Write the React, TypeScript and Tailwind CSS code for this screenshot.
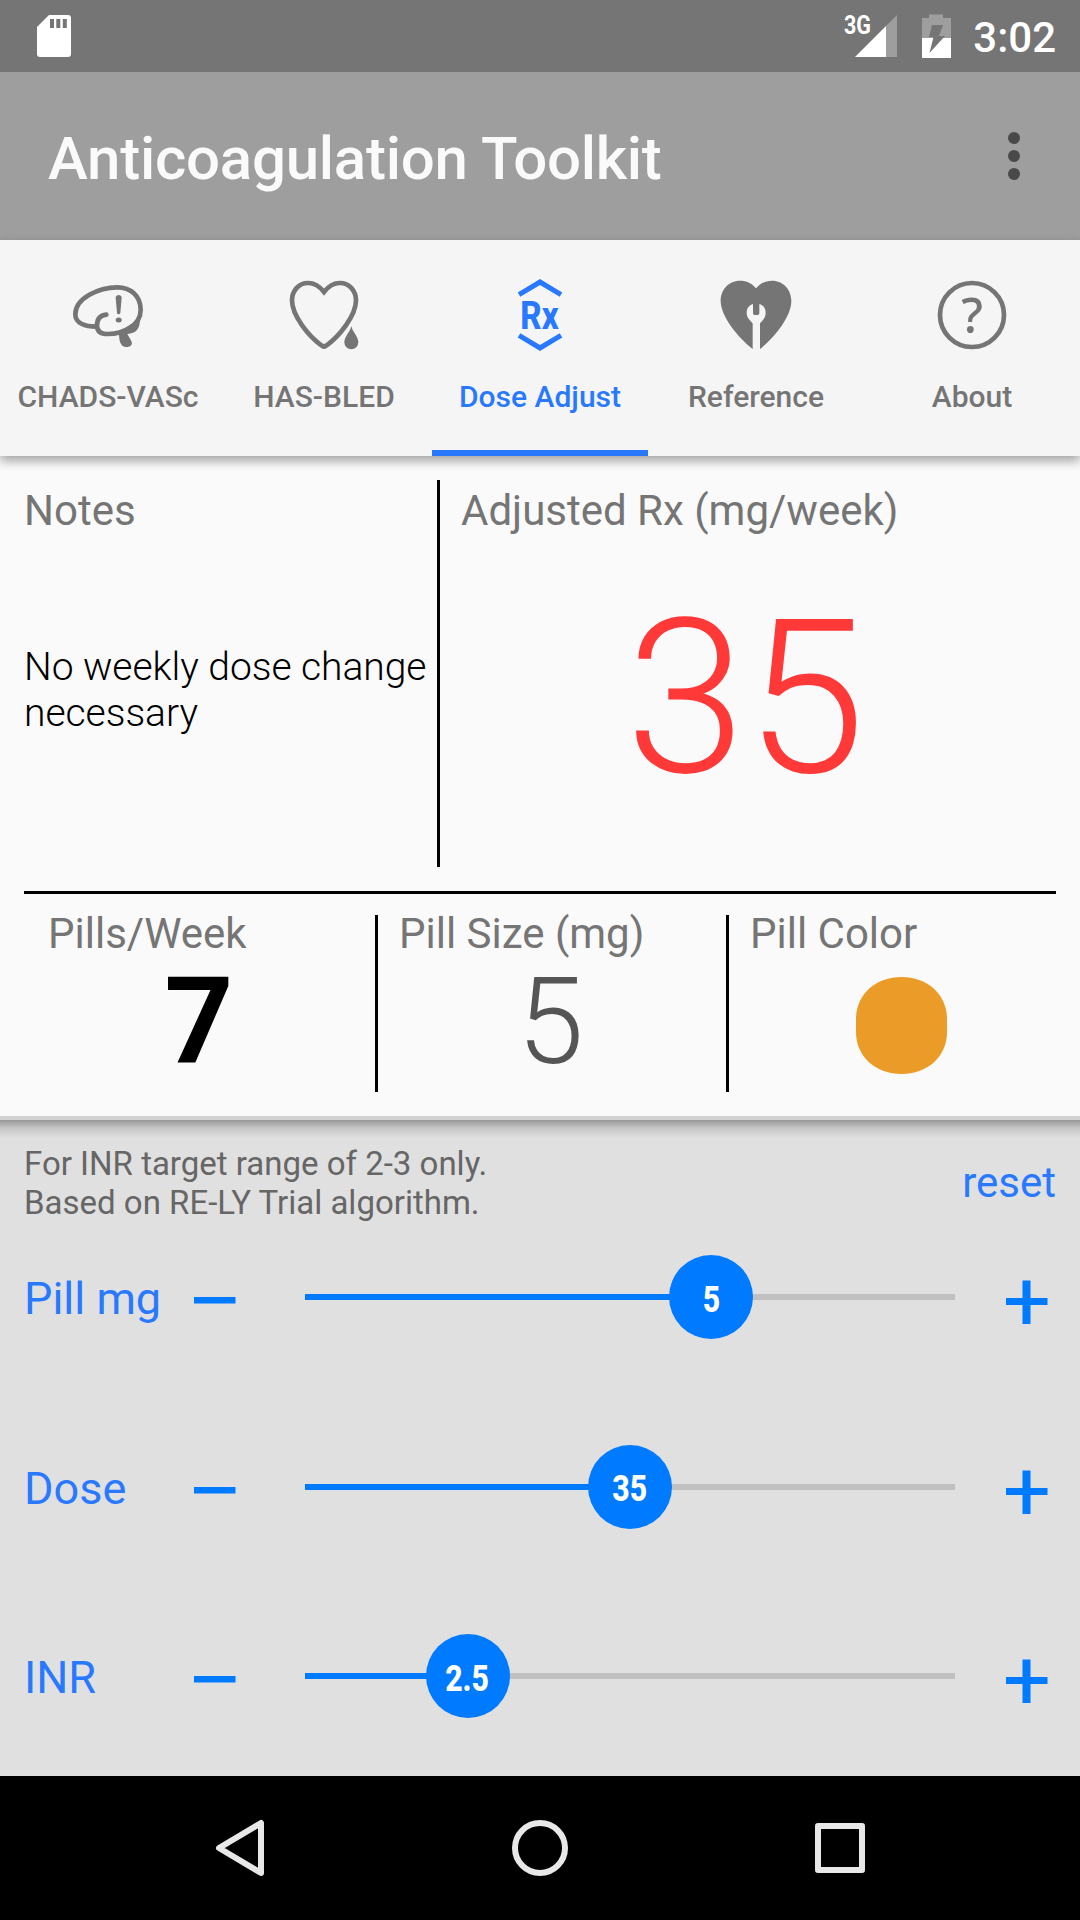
import React, { useState } from "react";

const tabs = [
  { name: "CHADS-VASc", icon: <BrainIcon /> },
  { name: "HAS-BLED", icon: <BleedIcon /> },
  { name: "Dose Adjust", icon: <RxIcon /> },
  { name: "Reference", icon: <ReferenceIcon /> },
  { name: "About", icon: <AboutIcon /> },
];

function BrainIcon() {
  return (
    <svg className="size-[72px]" viewBox="0 0 216 216" fill="none">
      <path
        d="M103 107C84 109 75 122 75 140C75 158 88 165 108 165C150 165 206 142 206 92C206 50 175 25 136 25C80 25 10 58 10 106C10 132 38 143 74 143"
        stroke="currentColor"
        strokeWidth="14"
        strokeLinecap="round"
      />
      <path
        d="M204 118C204 152 192 163 166 165L178 186C186 204 162 208 151 200C143 193 141 180 141 160Z"
        fill="currentColor"
      />
      <path
        d="M131 56C131 45 149 45 149 56L145 102C144 107 136 107 135 102Z"
        fill="currentColor"
      />
      <ellipse cx="140" cy="123" rx="9" ry="7.500" fill="currentColor" />
    </svg>
  );
}

function BleedIcon() {
  return (
    <svg className="size-[72px]" viewBox="0 0 216 216">
      <path
        d="M108 39C95 22 80 12 60 12C32 12 12 36 12 64C12 110 62 172 100 199Q108 206 116 199C154 172 204 110 204 64C204 36 184 12 156 12C136 12 121 22 108 39Z"
        fill="none"
        stroke="currentColor"
        strokeWidth="14"
      />
      <path
        d="M190 141C194 160 211 172 211 190A21 21 0 0 1 169 190C169 172 186 160 190 141Z"
        fill="currentColor"
      />
    </svg>
  );
}

function RxIcon() {
  return (
    <svg className="size-[72px]" viewBox="0 0 216 216">
      <path
        d="M45 47L108 9L171 47M45 169L108 207L171 169"
        fill="none"
        stroke="currentColor"
        strokeWidth="15"
      />
      <text
        x="49"
        y="149"
        fontSize="114"
        fontWeight="800"
        textLength="115"
        lengthAdjust="spacingAndGlyphs"
        fill="currentColor"
      >
        Rx
      </text>
    </svg>
  );
}

function ReferenceIcon() {
  return (
    <svg className="size-[72px]" viewBox="0 0 216 216">
      <path
        d="M108 28C96 13 80 5 60 5C26 5 2 32 2 66C2 110 50 172 98 210L120 210C168 172 214 110 214 66C214 32 190 5 156 5C136 5 120 13 108 28Z"
        fill="currentColor"
      />
      {/* wrench */}
      <path
        d="M99 75C87 79 80 88 80 101C80 117 90 123 98 133V211H120V133C128 123 137 117 137 101C137 88 130 79 118 75V103Q118 108 113 108H104Q99 108 99 103Z"
        fill="#f5f5f5"
      />
    </svg>
  );
}

function AboutIcon() {
  return (
    <svg className="size-[72px]" viewBox="0 0 216 216">
      <circle
        cx="108"
        cy="108"
        r="96"
        fill="none"
        stroke="currentColor"
        strokeWidth="14"
      />
      <text
        x="108"
        y="162"
        fontSize="146"
        fontWeight="500"
        textAnchor="middle"
        className="font-['Noto_Sans',sans-serif]"
        fill="currentColor"
      >
        ?
      </text>
    </svg>
  );
}

function StatusBar() {
  return (
    <div className="flex h-[72px] items-start bg-[#757575] text-white">
      {/* sd card */}
      <svg className="ml-9 h-[72px] w-9" viewBox="0 0 36 72">
        <path
          d="M13 15H32Q35 15 35 18V54Q35 57 32 57H4Q1 57 1 54V27Z"
          fill="#fff"
        />
        <path
          d="M14 19h4v9h-4zM20.300 19h4v9h-4zM26.800 19h4v9h-4z"
          fill="#757575"
        />
      </svg>
      <svg className="ml-auto h-[72px] w-[120px]" viewBox="0 0 120 72">
        <text
          x="8"
          y="33.500"
          fontSize="25"
          fontWeight="700"
          textLength="27"
          lengthAdjust="spacingAndGlyphs"
          fill="#fff"
        >
          3G
        </text>
        <path d="M61 15V57H50V26Z" fill="#9e9e9e" />
        <path d="M19 57L50 26V57Z" fill="#fff" />
        <path d="M93 14.500h14V18h8v20H86V18h7z" fill="#9e9e9e" />
        <path d="M86 38h29v20H86z" fill="#fff" />
        <path d="M96 25h11l-4 11h6L93.500 53l4-16H93z" fill="#757575" />
      </svg>
      <span className="mr-6 ml-[17px] pt-[2px] text-[42px] leading-[72px] font-medium">
        3:02
      </span>
    </div>
  );
}

type SliderProps = {
  label: string;
  value: number;
  min: number;
  max: number;
  step: number;
  onChange: (v: number) => void;
};

function SliderRow({ label, value, min, max, step, onChange }: SliderProps) {
  const percent = ((value - min) / (max - min)) * 100;

  return (
    <div className="flex h-[84px] items-center pl-6 text-[#007aff]">
      <span className="w-[170px] pt-[4px] text-[45px] leading-[52px] text-[#2979ff]">
        {label}
      </span>
      <button onClick={() => onChange(Math.max(min, value - step))}>
        <svg className="h-[84px] w-[42px]" viewBox="0 0 42 84">
          <path d="M0 42h41.500v6.500H0z" fill="currentColor" />
        </svg>
      </button>
      <div className="relative ml-[69px] h-[6px] w-[650px] bg-[#c0c0c0]">
        <div className="h-full bg-[#007aff]" style={{ width: `${percent}%` }} />
        <div
          className="absolute top-1/2 flex size-[84px] -translate-1/2 items-center justify-center rounded-full bg-[#007aff]"
          style={{ left: `${percent}%` }}
        >
          <span className="scale-x-[0.84] pt-[5px] text-[36px] font-extrabold text-white">
            {value}
          </span>
        </div>
      </div>
      <button
        className="ml-[51px]"
        onClick={() => onChange(Math.min(max, value + step))}
      >
        <svg className="h-[84px] w-[42px]" viewBox="0 0 42 84">
          <path d="M0 43h41.500v7H0zM16.500 25.500h8v43.500h-8z" fill="currentColor" />
        </svg>
      </button>
    </div>
  );
}

export default function App() {
  const [active, setActive] = useState("Dose Adjust");
  const [pill, setPill] = useState(5);
  const [dose, setDose] = useState(35);
  const [inr, setInr] = useState(2.5);

  const onReset = () => {
    setPill(5);
    setDose(35);
    setInr(2.5);
  };

  return (
    <div className="flex h-[1920px] w-[1080px] flex-col overflow-hidden bg-[#e0e0e0] font-[Roboto,sans-serif]">
      <StatusBar />

      {/* app bar */}
      <div className="flex h-[168px] items-center justify-between bg-[#9e9e9e] pl-12">
        <h1 className="pt-[5px] text-[60px] leading-[70px] font-medium tracking-[-0.25px] text-[#fafafa]">
          Anticoagulation Toolkit
        </h1>
        <svg className="h-[168px] w-[132px]" viewBox="0 0 132 168" fill="#494949">
          <circle cx="66" cy="66" r="6" />
          <circle cx="66" cy="84" r="6" />
          <circle cx="66" cy="102" r="6" />
        </svg>
      </div>

      {/* tabs */}
      <div className="z-10 grid h-[216px] grid-cols-5 bg-[#f5f5f5] shadow-[0_5px_10px_rgba(0,0,0,0.35)]">
        {tabs.map((t) => (
          <button
            key={t.name}
            onClick={() => setActive(t.name)}
            className={
              t.name === active
                ? "flex flex-col items-center border-b-[6px] border-[#2979ff] pt-[39px] text-[#2979ff]"
                : "flex flex-col items-center border-b-[6px] border-transparent pt-[39px] text-[#757575]"
            }
          >
            {t.icon}
            <span className="mt-[28px] text-[30px] leading-9 font-medium whitespace-nowrap">
              {t.name}
            </span>
          </button>
        ))}
      </div>

      {/* result */}
      <div className="h-[660px] bg-[#fafafa] px-6 pt-6 text-[42px] leading-[50px] text-[#757575]">
        <div className="flex h-[387px]">
          <div className="w-[413px] pt-[6px]">
            <p>Notes</p>
            <p className="mt-[108px] text-[39px] leading-[46px] font-light tracking-[-0.05px] whitespace-nowrap text-black">
              No weekly dose change
              <br />
              necessary
            </p>
          </div>
          <div className="w-[3px] bg-black" />
          <div className="flex-1 pt-[6px] pl-[21px]">
            <p>Adjusted Rx (mg/week)</p>
            <p className="mt-[37px] pr-[26px] text-center text-[216px] leading-[252px] font-light text-[#ff3838]">
              {dose}
            </p>
          </div>
        </div>
        <div className="mt-6 h-[3px] bg-black" />
        <div className="mt-[21px] flex h-[177px]">
          <div className="-mt-[6px] w-[351px] pl-6">
            <p>Pills/Week</p>
            <p className="mt-[3px] pr-[25px] text-center text-[120px] leading-[120px] font-bold text-black">
              {Math.round(dose / pill)}
            </p>
          </div>
          <div className="w-[3px] bg-black" />
          <div className="-mt-[6px] w-[348px] pl-[21px]">
            <p>Pill Size (mg)</p>
            <p className="mt-[3px] pr-[24px] text-center text-[120px] leading-[120px] font-light text-[#555555]">
              {pill}
            </p>
          </div>
          <div className="w-[3px] bg-black" />
          <div className="-mt-[6px] pl-[21px]">
            <p>Pill Color</p>
            <svg
              className="mt-[18px] ml-[106px] h-[97px] w-[91px]"
              viewBox="0 0 91 97"
            >
              <path
                d="M45.500 0C71 0 91 17 91 42V55C91 80 71 97 45.500 97S0 80 0 55V42C0 17 20 0 45.500 0Z"
                fill="#eb9b27"
              />
            </svg>
          </div>
        </div>
      </div>

      {/* inputs */}
      <div className="h-[4px] bg-[#d2d2d2]" />
      <div className="h-[18px] bg-linear-to-b from-[#989898] via-[#c9c9c9] to-[#e0e0e0]" />
      <div className="mt-[6px] flex h-[78px] items-center justify-between px-6">
        <p className="text-[33px] leading-[39px] text-[#666666]">
          For INR target range of 2-3 only.
          <br />
          Based on RE-LY Trial algorithm.
        </p>
        <button
          className="text-[42px] leading-[50px] text-[#2979ff]"
          onClick={onReset}
        >
          reset
        </button>
      </div>
      <div className="mt-[33px] flex h-[463px] flex-col justify-between">
        <SliderRow label="Pill mg" value={pill} min={0} max={8} step={1} onChange={setPill} />
        <SliderRow label="Dose" value={dose} min={0} max={70} step={1} onChange={setDose} />
        <SliderRow label="INR" value={inr} min={1} max={7} step={0.5} onChange={setInr} />
      </div>

      {/* navigation bar */}
      <div className="mt-auto flex h-36 items-center justify-center gap-[228px] bg-black">
        <svg className="size-[72px]" viewBox="0 0 72 72" fill="none" stroke="#e8e8e8" strokeWidth="6" strokeLinejoin="round">
          <path d="M57 11V61L15 36Z" />
        </svg>
        <svg className="size-[72px]" viewBox="0 0 72 72" fill="none" stroke="#e8e8e8" strokeWidth="6">
          <circle cx="36" cy="36" r="25" />
        </svg>
        <svg className="size-[72px]" viewBox="0 0 72 72" fill="none" stroke="#e8e8e8" strokeWidth="6" strokeLinejoin="round">
          <rect x="14" y="14" width="44" height="44" />
        </svg>
      </div>
    </div>
  );
}
